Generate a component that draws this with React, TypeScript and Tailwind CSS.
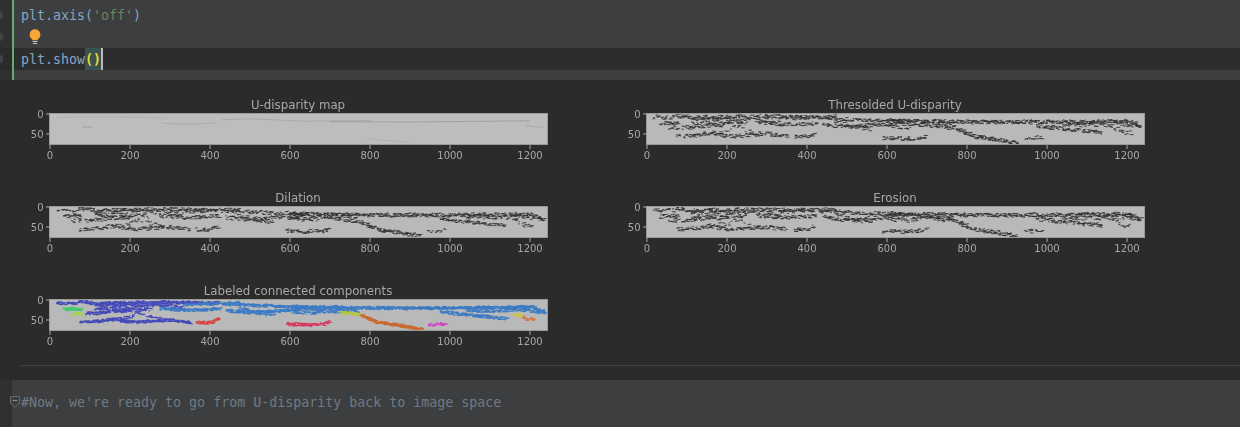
const rand = (seed: number) => {
	let s = seed;
	return () => {
		s = (s * 16807) % 2147483647;
		return (s % 10000) / 10000;
	};
};

interface Strand {
	pts: number[][];
	label: string;
	passes?: number;
}

const BLUE = "#4349b8";
const SKY = "#3c7bc4";

// coordinates are data units of the plots: x 0-1240, y 0-77
const strands: Strand[] = [
	{ pts: [[15, 8], [40, 9], [68, 8]], label: BLUE, passes: 2 },
	{ pts: [[70, 4], [110, 9], [200, 7], [300, 6], [420, 8]], label: BLUE, passes: 3 },
	{ pts: [[110, 14], [190, 12], [290, 14], [330, 18]], label: BLUE, passes: 2 },
	{ pts: [[33, 24], [55, 22], [80, 25]], label: "#3dc86a", passes: 3 },
	{ pts: [[54, 35], [80, 34]], label: "#a6d63c", passes: 2 },
	{ pts: [[88, 34], [120, 32], [150, 28], [205, 26]], label: BLUE, passes: 3 },
	{ pts: [[110, 22], [170, 20], [250, 24]], label: BLUE, passes: 2 },
	{ pts: [[150, 48], [200, 42], [215, 30], [240, 20]], label: BLUE },
	{ pts: [[215, 30], [250, 42], [290, 50]], label: BLUE },
	{ pts: [[75, 56], [110, 54], [150, 48], [205, 56], [250, 53], [295, 50], [350, 57]], label: BLUE, passes: 3 },
	{ pts: [[366, 57], [400, 56], [420, 46]], label: "#d5433f", passes: 3 },
	{ pts: [[275, 22], [340, 26], [425, 22]], label: SKY, passes: 3 },
	{ pts: [[333, 12], [420, 8], [475, 6]], label: SKY, passes: 2 },
	{ pts: [[430, 10], [480, 12], [560, 16], [640, 18]], label: SKY, passes: 3 },
	{ pts: [[440, 26], [490, 32], [540, 28], [620, 26]], label: SKY, passes: 3 },
	{ pts: [[470, 20], [520, 34], [560, 38]], label: SKY, passes: 2 },
	{ pts: [[600, 17], [800, 20], [1000, 20], [1200, 18], [1236, 32]], label: SKY, passes: 4 },
	{ pts: [[610, 24], [690, 22], [770, 30]], label: SKY, passes: 2 },
	{ pts: [[605, 30], [650, 34], [680, 28], [730, 30]], label: SKY, passes: 2 },
	{ pts: [[725, 32], [775, 36]], label: "#b5c83c", passes: 3 },
	{ pts: [[775, 38], [815, 56], [870, 64], [928, 74]], label: "#c9692f", passes: 4 },
	{ pts: [[590, 60], [640, 62], [680, 60], [700, 54]], label: "#d43a5e", passes: 3 },
	{ pts: [[945, 62], [990, 58]], label: "#d43cc8", passes: 2 },
	{ pts: [[975, 30], [1050, 38], [1140, 47]], label: SKY, passes: 3 },
	{ pts: [[1040, 26], [1100, 28], [1180, 25], [1230, 32]], label: SKY, passes: 2 },
	{ pts: [[1157, 35], [1180, 40]], label: "#c8c83c", passes: 2 },
	{ pts: [[1180, 42], [1190, 48], [1210, 47]], label: "#d5743f", passes: 2 },
];

const speckle = (pts: number[][], seed: number, passes: number, spread: number, step: number) => {
	const r = rand(seed);
	let d = "";
	for (let p = 0; p < passes; p++) {
		for (let i = 0; i < pts.length - 1; i++) {
			const [ax, ay] = pts[i];
			const [bx, by] = pts[i + 1];
			const n = Math.max(1, Math.round(Math.hypot(bx - ax, by - ay) / step));
			for (let j = 0; j < n; j++) {
				const x = ax + ((bx - ax) * j) / n + (r() - 0.5) * step;
				const y = ay + ((by - ay) * j) / n + (r() - 0.5) * spread;
				const dx = 3 + r() * 8;
				d += `M${x.toFixed(1)} ${y.toFixed(1)}l${dx.toFixed(1)} ${((r() - 0.5) * 4).toFixed(1)}`;
			}
		}
	}
	return d;
};

const faint = [
	{ d: "M15 9L90 7L200 8L300 10", o: 0.12 },
	{ d: "M80 32L105 33", o: 0.35 },
	{ d: "M280 23L340 26L420 22", o: 0.18 },
	{ d: "M430 14L500 12L640 18L800 16", o: 0.22 },
	{ d: "M700 19L900 20L1200 17", o: 0.32 },
	{ d: "M1190 30L1235 33", o: 0.25 },
	{ d: "M790 60L840 66L900 70", o: 0.15 },
];

type Mode = "raw" | "binary" | "labels";

function Chart({ title, mode, seed = 7, width = 2.1 }: { title: string; mode: Mode; seed?: number; width?: number }) {
	const ox = 30;
	const oy = 18;
	const k = 0.4;
	return (
		<svg width={560} height={80} className="block blur-[0.35px]" fontFamily="'DejaVu Sans', sans-serif">
			<text x={ox + 248} y={13} textAnchor="middle" fontSize={11.8} fill="#a8a8a8">
				{title}
			</text>
			<svg x={ox} y={oy} width={498} height={31} viewBox="0 0 1245 77.5">
				<rect x={0} y={0} width={1245} height={78} fill={mode === "raw" ? "#bdbdbd" : "#b9b9b9"} />
				{mode === "raw" &&
					faint.map((l) => <path key={l.d} d={l.d} fill="none" stroke="#666" strokeWidth={2.5} opacity={l.o} />)}
				{mode !== "raw" &&
					strands.map((s, i) => (
						<path
							key={i}
							d={speckle(s.pts, seed * 131 + i * 97 + 11, s.passes ?? 1, mode === "labels" ? 7 : 9, mode === "labels" ? 4 : 7)}
							fill="none"
							stroke={mode === "labels" ? s.label : "#2e2e2e"}
							strokeWidth={mode === "labels" ? 3 : width}
						/>
					))}
			</svg>
			<rect x={ox - 0.5} y={oy - 0.5} width={498} height={31} fill="none" stroke="#9a9a9a" strokeWidth={1} />
			{[0, 50].map((v) => (
				<g key={v}>
					<line x1={ox - 4} x2={ox} y1={oy + v * k} y2={oy + v * k} stroke="#a8a8a8" />
					<text x={ox - 6.5} y={oy + v * k + 4} textAnchor="end" fontSize={10} fill="#a8a8a8">
						{v}
					</text>
				</g>
			))}
			{[0, 200, 400, 600, 800, 1000, 1200].map((v) => (
				<g key={v}>
					<line x1={ox + v * k} x2={ox + v * k} y1={oy + 31} y2={oy + 35} stroke="#a8a8a8" />
					<text x={ox + v * k} y={oy + 45} textAnchor="middle" fontSize={10} fill="#a8a8a8">
						{v}
					</text>
				</g>
			))}
		</svg>
	);
}

function GutterRow({ mark, active }: { mark: string; active?: boolean }) {
	return (
		<div className={`h-[22px] w-3 flex items-center ${active ? "bg-[#2b2b2c]" : ""}`}>
			<div className={`h-2 w-[3px] rounded-r-sm ${mark}`} />
		</div>
	);
}

export default function App() {
	return (
		<div className="w-[1240px] h-[427px] overflow-hidden bg-[#2b2b2b] font-['DejaVu_Sans_Mono',monospace] text-[13.3px]">
			<div className="flex h-20">
				<div className="w-3 bg-[#303030] pt-1 flex flex-col">
					<GutterRow mark="bg-[#434445]" />
					<GutterRow mark="bg-[#434340]" />
					<GutterRow mark="bg-[#434445]" active />
				</div>
				<div className="w-0.5 bg-[#62b16b]" />
				<div className="flex-1 bg-[#3d3e40] pt-1">
					<div className="h-[22px] pl-[7px] leading-[24px] text-[#86a6c6]">
						plt.axis(<span className="text-[#6a8759]">'off'</span>)
					</div>
					<div className="h-[22px] pl-[14px] flex items-center">
						<svg width="14" height="16" viewBox="0 0 14 16">
							<path d="M7 0.2a5.4 5.4 0 0 0-3.2 9.7c.6.5.8.8.8 1.3h4.8c0-.5.2-.8.8-1.3a5.4 5.4 0 0 0-3.2-9.7z" fill="#f4a732" />
							<path d="M4.5 12.5h5M5 14.5h4" stroke="#c9c9c9" strokeWidth="1" />
						</svg>
					</div>
					<div className="h-[22px] pl-[7px] leading-[24px] bg-[#2d2d2e] text-[#86a6c6] flex">
						plt.show
						<span className="bg-[#3b514d] text-[#e8dc3a] font-bold">()</span>
						<span className="w-0.5 bg-[#bbbbbb]" />
					</div>
				</div>
			</div>
			<div className="pt-4 pl-5">
				<div className="grid grid-cols-[597px_597px] gap-y-[13px]">
					<Chart title="U-disparity map" mode="raw" />
					<Chart title="Thresolded U-disparity" mode="binary" seed={7} />
					<Chart title="Dilation" mode="binary" seed={19} />
					<Chart title="Erosion" mode="binary" seed={23} />
					<Chart title="Labeled connected components" mode="labels" seed={31} />
				</div>
			</div>
			<div className="mt-[3px] ml-[21px] h-px bg-[#444444]" />
			<div className="mt-[14px] flex h-[47px]">
				<div className="w-3 bg-[#303030]" />
				<div className="flex-1 bg-[#3d3e40] flex items-center text-[#6f7b84] relative pb-0.5">
					<svg width="10" height="12" viewBox="0 0 10 12" className="absolute -left-[2px] top-[16px]">
						<path d="M0.5 0.5h9v6.5l-4.5 4.5-4.5-4.5z" fill="#3d3e40" stroke="#68696b" />
						<path d="M2.5 4.5h5" stroke="#85878a" />
					</svg>
					<span className="pl-[9px]">#Now, we're ready to go from U-disparity back to image space</span>
				</div>
			</div>
		</div>
	);
}
